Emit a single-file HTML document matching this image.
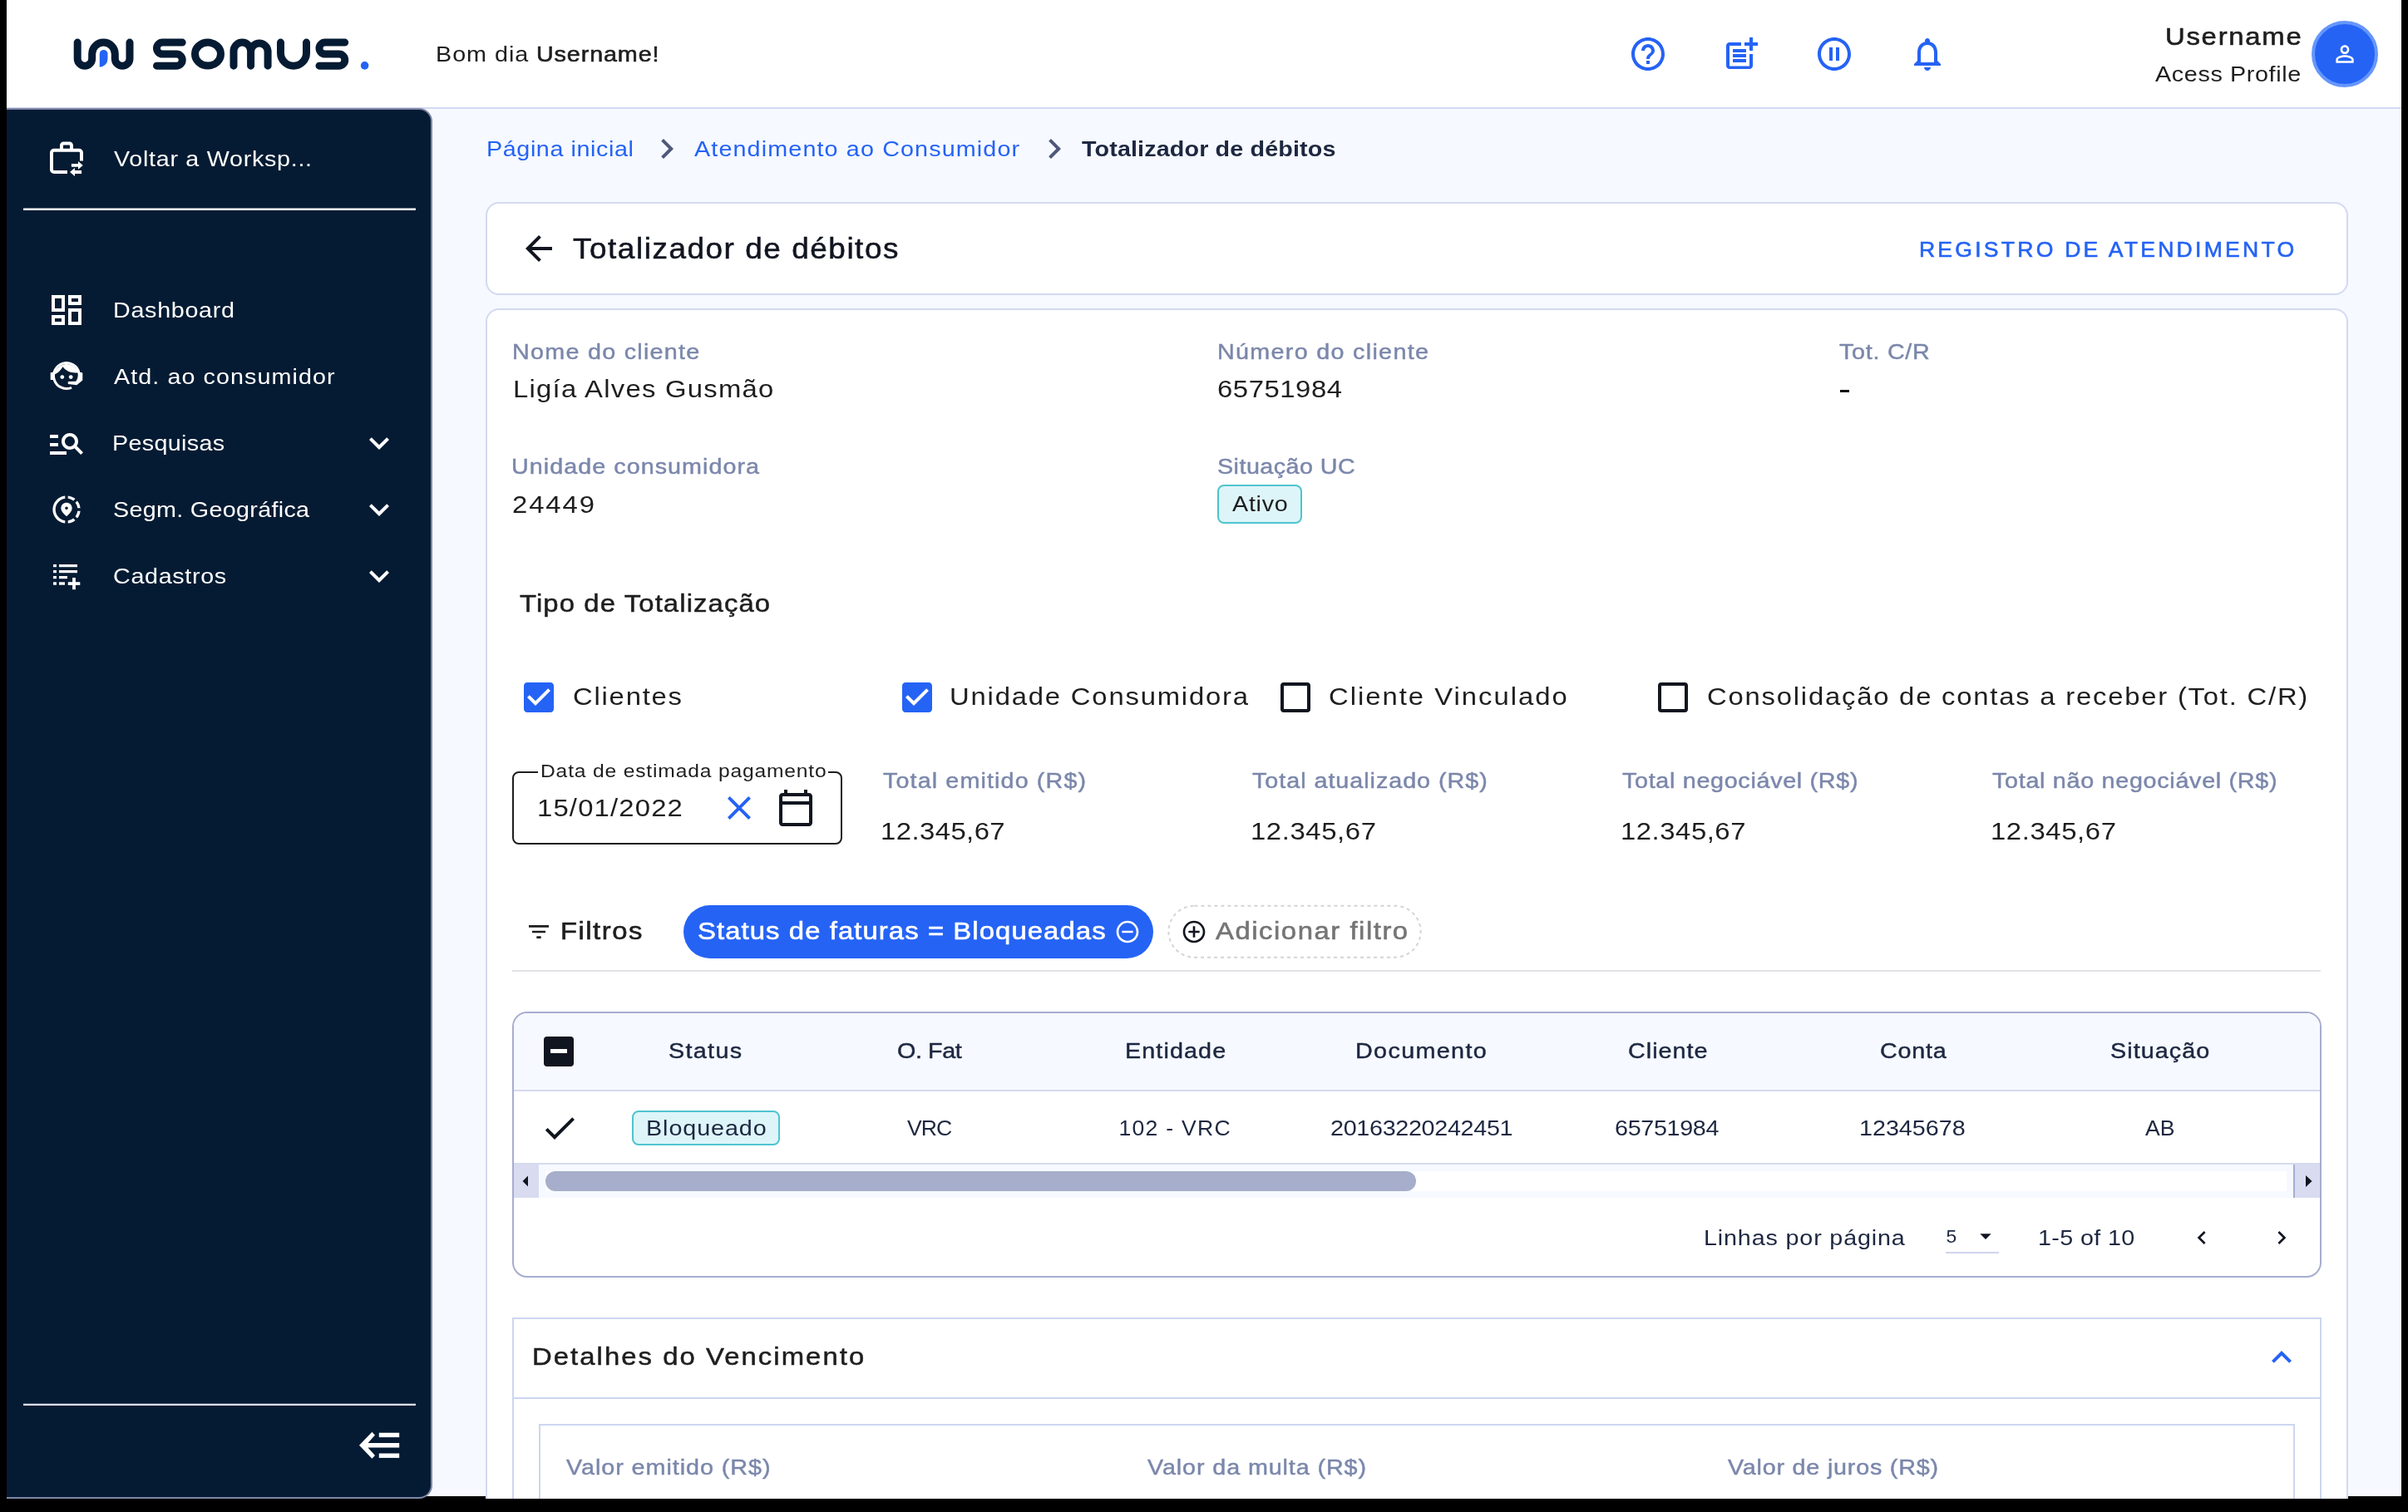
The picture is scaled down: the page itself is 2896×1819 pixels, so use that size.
<!DOCTYPE html>
<html lang="pt-BR"><head><meta charset="utf-8"><title>Totalizador de débitos</title><style>
html,body{margin:0;padding:0;background:#000;}
body{width:2896px;height:1819px;overflow:hidden;position:relative;font-family:"Liberation Sans",sans-serif;}
#app{position:absolute;left:0;top:0;width:2896px;height:1819px;overflow:hidden;will-change:transform;}
#app div,#app svg,#app span{position:absolute;box-sizing:border-box;}
.t{white-space:pre;transform-origin:0 0;}
</style></head><body><div id="app">
<div style="left:8px;top:0px;width:2880px;height:1800px;background:#f6f9ff;"></div>
<div style="left:8px;top:0px;width:2880px;height:131px;background:#fff;border-bottom:2px solid #d3d9f0;"></div>
<svg style="left:0;top:0" width="480" height="130" viewBox="0 0 480 130" fill="none" stroke="#051b33" stroke-width="9" stroke-linecap="round" stroke-linejoin="round">
<path d="M93.2,51.1 V70.4 A8.75,8.75 0 0 0 110.7,70.4 V64.9 A13.8,13.8 0 0 1 138.3,64.9 V70.4 A8.75,8.75 0 0 0 156,70.4 V51.1"/>
<path d="M219.2,51.1 H195.5 A7,7 0 0 0 195.5,65.1 H212.2 A7,7 0 0 1 212.2,79.15 H188.5"/>
<ellipse cx="250" cy="65.1" rx="15.5" ry="14"/>
<path d="M281,79.15 V61.4 A10.3,10.3 0 0 1 301.6,61.4 V79.15 M301.6,61.4 A10.3,10.3 0 0 1 322.1,61.4 V79.15"/>
<path d="M337.5,51.1 V63.65 A15.5,15.5 0 0 0 368.5,63.65 V51.1"/>
<path d="M414.7,51.1 H391 A7,7 0 0 0 391,65.1 H407.7 A7,7 0 0 1 407.7,79.15 H384"/>
<path stroke="none" fill="#2563f5" d="M119.8,80.7 V64.8 A4.85,4.85 0 0 1 129.5,64.8 V71 A9.7,9.7 0 0 1 119.8,80.7 Z"/>
<circle stroke="none" fill="#2563f5" cx="438.6" cy="78.9" r="4.8"/>
</svg>
<span class="t" id="t3" style="left:524.44px;top:49.00px;font-size:26.6px;line-height:32px;color:#1e1e1e;letter-spacing:0.905px;transform:scaleX(1.08);">Bom dia</span>
<span class="t" id="t4" style="left:645.16px;top:49.00px;font-size:26.6px;line-height:32px;color:#1e1e1e;letter-spacing:0.813px;transform:scaleX(1.08);-webkit-text-stroke:0.6px #1e1e1e;">Username!</span>
<svg style="left:1958px;top:41px" width="48" height="48" viewBox="0 0 24 24"><path fill="#2563f5" d="M11 18h2v-2h-2v2zm1-16C6.48 2 2 6.48 2 12s4.48 10 10 10 10-4.48 10-10S17.52 2 12 2zm0 18c-4.41 0-8-3.59-8-8s3.59-8 8-8 8 3.59 8 8-3.59 8-8 8zm0-14c-2.21 0-4 1.79-4 4h2c0-1.1.9-2 2-2s2 .9 2 2c0 2-3 1.75-3 5h2c0-2.25 3-2.5 3-5 0-2.21-1.79-4-4-4z"/></svg>
<svg style="left:2070px;top:41px" width="48" height="48" viewBox="0 0 24 24"><path fill="#2563f5" d="M17 19.22H5V7h7V5H5c-1.1 0-2 .9-2 2v12c0 1.1.9 2 2 2h12c1.1 0 2-.9 2-2v-7h-2v7.22z M19 2h-2v3h-3c.01.01 0 2 0 2h3v2.99c.01.01 2 0 2 0V7h3V5h-3V2z M7 9h8v2H7z M7 12v2h8v-2h-3z M7 15h8v2H7z"/></svg>
<svg style="left:2182px;top:41px" width="48" height="48" viewBox="0 0 24 24"><path fill="#2563f5" d="M9 16h2V8H9v8zm3-14C6.48 2 2 6.48 2 12s4.48 10 10 10 10-4.48 10-10S17.52 2 12 2zm0 18c-4.41 0-8-3.59-8-8s3.59-8 8-8 8 3.59 8 8-3.59 8-8 8zm1-4h2V8h-2v8z"/></svg>
<svg style="left:2294px;top:41px" width="48" height="48" viewBox="0 0 24 24"><path fill="#2563f5" d="M12 22c1.1 0 2-.9 2-2h-4c0 1.1.9 2 2 2zm6-6v-5c0-3.07-1.63-5.64-4.5-6.32V4c0-.83-.67-1.5-1.5-1.5s-1.5.67-1.5 1.5v.68C7.64 5.36 6 7.92 6 11v5l-2 2v1h16v-1l-2-2zm-2 1H8v-6c0-2.48 1.51-4.5 4-4.5s4 2.02 4 4.5v6z"/></svg>
<span class="t" id="t9" style="left:2603.76px;top:25.00px;font-size:30.4px;line-height:36px;color:#1e1e1e;letter-spacing:1.625px;transform:scaleX(1.08);-webkit-text-stroke:0.6px #1e1e1e;">Username</span>
<span class="t" id="t10" style="left:2592.00px;top:73.00px;font-size:26.6px;line-height:32px;color:#1e1e1e;letter-spacing:0.590px;transform:scaleX(1.08);">Acess Profile</span>
<div style="left:2780px;top:25px;width:80px;height:80px;border-radius:50%;background:#2563f5;border:4px solid #6596fb;"></div>
<svg style="left:2804px;top:49px" width="32" height="32" viewBox="0 0 24 24"><path fill="#fff" d="M12 5.9c1.16 0 2.1.94 2.1 2.1s-.94 2.1-2.1 2.1S9.9 9.16 9.9 8s.94-2.1 2.1-2.1m0 9c2.97 0 6.1 1.46 6.1 2.1v1.1H5.9V17c0-.64 3.13-2.1 6.1-2.1M12 4C9.79 4 8 5.79 8 8s1.79 4 4 4 4-1.79 4-4-1.79-4-4-4zm0 9c-2.67 0-8 1.34-8 4v3h16v-3c0-2.66-5.33-4-8-4z"/></svg>
<div style="left:8px;top:130px;width:512px;height:1673px;background:#051b33;border:2px solid #8087a9;border-left:none;border-radius:0 16px 16px 0;"></div>
<svg style="left:52px;top:162px" width="56" height="56" viewBox="52 162 56 56" fill="none" stroke="#fff" stroke-width="4">
<path d="M98,193.4 V183.8 a3,3 0 0 0 -3,-3 H65 a3,3 0 0 0 -3,3 V204 a3,3 0 0 0 3,3 H81"/>
<path d="M74,180.8 V175 a2.5,2.5 0 0 1 2.5,-2.5 h7 a2.5,2.5 0 0 1 2.5,2.5 V180.8"/>
<path stroke="none" fill="#fff" d="M85.9,197 H94 V194 L99.8,198.9 L94,203.7 V200.8 H85.9 Z M98.1,204.9 H90 V202 L84,207 L90,212 V209 H98.1 Z"/>
</svg>
<span class="t" id="t15" style="left:137.00px;top:175.00px;font-size:26.6px;line-height:32px;color:#fff;letter-spacing:0.650px;transform:scaleX(1.08);">Voltar a Worksp...</span>
<svg style="left:28px;top:248px" width="472" height="8" viewBox="0 0 472 8"><rect x="0" y="2.5" width="472" height="2.5" fill="#fff"/></svg>
<svg style="left:56px;top:349px" width="48" height="48" viewBox="0 0 24 24"><path fill="#fff" d="M19 5v2h-4V5h4M9 5v6H5V5h4m10 8v6h-4v-6h4M9 17v2H5v-2h4M21 3h-8v6h8V3zM11 3H3v10h8V3zm10 8h-8v10h8V11zm-10 4H3v6h8v-6z"/></svg>
<span class="t" id="t18" style="left:135.84px;top:357.00px;font-size:26.6px;line-height:32px;color:#fff;letter-spacing:0.636px;transform:scaleX(1.08);">Dashboard</span>
<svg style="left:56px;top:428px" width="48" height="48" viewBox="56 428 48 48" fill="#fff">
<path d="M86.06,466.27 A15.5,15.5 0 1 1 95.16,448.78" fill="none" stroke="#fff" stroke-width="3"/>
<path d="M65.6,450.5 Q72.2,447.6 75.4,441.3 Q81.5,449.6 94.3,448.2 A14.8,14.8 0 0 0 65.6,450.5 Z"/>
<rect x="60.7" y="448.1" width="4" height="9" rx="0.6"/>
<path d="M93.6,448 H98.4 L99.3,448.9 V457.4 L92.3,463.2 L81.8,462 V458.9 L91.4,458.7 Q93.8,455.6 93.7,451.5 Z"/>
<circle cx="74.8" cy="453.6" r="2.4"/><circle cx="85.2" cy="453.6" r="2.4"/>
</svg>
<span class="t" id="t20" style="left:137.20px;top:437.00px;font-size:26.6px;line-height:32px;color:#fff;letter-spacing:0.991px;transform:scaleX(1.08);">Atd. ao consumidor</span>
<svg style="left:56px;top:509px" width="48" height="48" viewBox="0 0 24 24"><path fill="#fff" d="M7 9H2V7h5v2zm0 3H2v2h5v-2zm13.59 7l-3.83-3.83c-.8.52-1.74.83-2.76.83-2.76 0-5-2.24-5-5s2.24-5 5-5 5 2.24 5 5c0 1.02-.31 1.96-.83 2.75L22 17.59 20.59 19zM17 11c0-1.65-1.35-3-3-3s-3 1.35-3 3 1.35 3 3 3 3-1.35 3-3zM2 19h10v-2H2v2z"/></svg>
<span class="t" id="t22" style="left:135.34px;top:517.00px;font-size:26.6px;line-height:32px;color:#fff;letter-spacing:0.308px;transform:scaleX(1.08);">Pesquisas</span>
<svg style="left:60px;top:593px" width="40" height="40" viewBox="0 0 24 24"><path fill="#fff" d="M13.02 19.93v2.02c2.01-.2 3.84-1 5.32-2.21l-1.42-1.43c-1.11.86-2.44 1.44-3.9 1.62z M4.03 12c0-4.05 3.03-7.41 6.95-7.93V2.05C5.95 2.58 2.03 6.84 2.03 12c0 5.16 3.92 9.42 8.95 9.95v-2.02c-3.92-.52-6.95-3.88-6.95-7.93z M19.95 11h2.02c-.2-2.01-1-3.84-2.21-5.32l-1.43 1.43c.86 1.1 1.44 2.43 1.62 3.89z M18.34 4.26c-1.48-1.21-3.32-2.01-5.32-2.21v2.02c1.46.18 2.79.76 3.9 1.62l1.42-1.43z M18.33 16.9l1.43 1.42c1.21-1.48 2.01-3.31 2.21-5.32h-2.02c-.18 1.46-.76 2.79-1.62 3.9z M16 11.1C16 8.61 14.1 7 12 7s-4 1.61-4 4.1c0 1.66 1.33 3.63 4 5.9 2.67-2.27 4-4.24 4-5.9zM12 12c-.59 0-1.07-.48-1.07-1.07 0-.59.48-1.07 1.07-1.07s1.07.48 1.07 1.07c0 .59-.48 1.07-1.07 1.07z"/></svg>
<span class="t" id="t24" style="left:136.42px;top:597.00px;font-size:26.6px;line-height:32px;color:#fff;letter-spacing:0.282px;transform:scaleX(1.08);">Segm. Geográfica</span>
<span class="t" id="t25" style="left:136.42px;top:677.00px;font-size:26.6px;line-height:32px;color:#fff;letter-spacing:0.612px;transform:scaleX(1.08);">Cadastros</span>
<svg style="left:432px;top:509px" width="48" height="48" viewBox="0 0 24 24"><path fill="#fff" d="M16.59 8.59L12 13.17 7.41 8.59 6 10l6 6 6-6z"/></svg>
<svg style="left:432px;top:589px" width="48" height="48" viewBox="0 0 24 24"><path fill="#fff" d="M16.59 8.59L12 13.17 7.41 8.59 6 10l6 6 6-6z"/></svg>
<svg style="left:432px;top:669px" width="48" height="48" viewBox="0 0 24 24"><path fill="#fff" d="M16.59 8.59L12 13.17 7.41 8.59 6 10l6 6 6-6z"/></svg>
<svg style="left:56px;top:669px" width="48" height="48" viewBox="56 669 48 48" fill="#fff">
<rect x="64" y="679" width="4" height="3.2"/><rect x="71" y="679" width="22" height="3.2"/>
<rect x="64" y="686" width="4" height="3.2"/><rect x="71" y="686" width="22" height="3.2"/>
<rect x="64" y="693" width="4" height="3.2"/><rect x="71" y="693" width="10" height="3.2"/>
<rect x="64" y="700.3" width="4" height="3.4"/><rect x="71" y="700.3" width="7" height="3.4"/>
<rect x="81.8" y="700.2" width="14.5" height="3.8"/><rect x="87.1" y="695" width="3.8" height="14.2"/>
</svg>
<svg style="left:28px;top:1686px" width="472" height="8" viewBox="0 0 472 8"><rect x="0" y="2.7" width="472" height="2.3" fill="#dcdee9"/></svg>
<svg style="left:424px;top:1714px" width="64" height="50" viewBox="424 1714 64 50" fill="#fff">
<rect x="455.8" y="1723.7" width="24.4" height="5.4"/><rect x="455.8" y="1748.5" width="24.4" height="5.4"/>
<path d="M480.2,1736 H442.5 L451,1726.6 L447.4,1722.8 L432,1738.7 L447.4,1754.8 L451,1751 L442.5,1741.4 H480.2 Z"/>
</svg>
<span class="t" id="t32" style="left:584.84px;top:163.00px;font-size:26.6px;line-height:32px;color:#2563f5;letter-spacing:0.547px;transform:scaleX(1.08);">Página inicial</span>
<svg style="left:778px;top:155px" width="48" height="48" viewBox="0 0 24 24"><path fill="#4e587a" d="M10 6L8.59 7.41 13.17 12l-4.58 4.59L10 18l6-6z"/></svg>
<span class="t" id="t34" style="left:835.00px;top:163.00px;font-size:26.6px;line-height:32px;color:#2563f5;letter-spacing:1.047px;transform:scaleX(1.08);">Atendimento ao Consumidor</span>
<svg style="left:1244px;top:155px" width="48" height="48" viewBox="0 0 24 24"><path fill="#4e587a" d="M10 6L8.59 7.41 13.17 12l-4.58 4.59L10 18l6-6z"/></svg>
<span class="t" id="t36" style="left:1301.00px;top:163.00px;font-size:26.6px;line-height:32px;color:#1d2740;letter-spacing:0.119px;transform:scaleX(1.08);font-weight:700;">Totalizador de débitos</span>
<div style="left:584px;top:243px;width:2240px;height:112px;background:#fff;border:2px solid #d3d9f0;border-radius:16px;"></div>
<svg style="left:624px;top:274.5px" width="48" height="48" viewBox="0 0 24 24"><path fill="#11151f" d="M20 11H7.83l5.59-5.59L12 4l-8 8 8 8 1.41-1.41L7.83 13H20v-2z"/></svg>
<span class="t" id="t39" style="left:689.17px;top:279.00px;font-size:34.2px;line-height:40px;color:#11151f;letter-spacing:1.422px;transform:scaleX(1.08);-webkit-text-stroke:0.5px #11151f;">Totalizador de débitos</span>
<span class="t" id="t40" style="left:2307.90px;top:284.00px;font-size:26.6px;line-height:32px;color:#2563f5;letter-spacing:3.225px;-webkit-text-stroke:0.6px #2563f5;">REGISTRO DE ATENDIMENTO</span>
<div style="left:584px;top:371px;width:2240px;height:1432px;background:#fff;border:2px solid #d3d9f0;border-bottom:none;border-radius:16px 16px 0 0;"></div>
<span class="t" id="t42" style="left:616.28px;top:407.00px;font-size:26.6px;line-height:32px;color:#7b87ab;letter-spacing:1.176px;transform:scaleX(1.08);-webkit-text-stroke:0.45px #7b87ab;">Nome do cliente</span>
<span class="t" id="t43" style="left:616.54px;top:449.00px;font-size:30.4px;line-height:36px;color:#1e1e1e;letter-spacing:1.167px;transform:scaleX(1.08);">Ligía Alves Gusmão</span>
<span class="t" id="t44" style="left:1463.88px;top:407.00px;font-size:26.6px;line-height:32px;color:#7b87ab;letter-spacing:1.206px;transform:scaleX(1.08);-webkit-text-stroke:0.45px #7b87ab;">Número do cliente</span>
<span class="t" id="t45" style="left:1463.92px;top:449.00px;font-size:30.4px;line-height:36px;color:#1e1e1e;letter-spacing:0.521px;transform:scaleX(1.08);">65751984</span>
<span class="t" id="t46" style="left:2212.04px;top:407.00px;font-size:26.6px;line-height:32px;color:#7b87ab;letter-spacing:0.670px;transform:scaleX(1.08);-webkit-text-stroke:0.45px #7b87ab;">Tot. C/R</span>
<div style="left:2213.4px;top:468.6px;width:10.8px;height:3.5px;background:#111;"></div>
<span class="t" id="t48" style="left:615.48px;top:545.00px;font-size:26.6px;line-height:32px;color:#7b87ab;letter-spacing:0.958px;transform:scaleX(1.08);-webkit-text-stroke:0.45px #7b87ab;">Unidade consumidora</span>
<span class="t" id="t49" style="left:616.32px;top:588.00px;font-size:30.4px;line-height:36px;color:#1e1e1e;letter-spacing:1.777px;transform:scaleX(1.08);">24449</span>
<span class="t" id="t50" style="left:1464.16px;top:545.00px;font-size:26.6px;line-height:32px;color:#7b87ab;letter-spacing:0.424px;transform:scaleX(1.08);-webkit-text-stroke:0.45px #7b87ab;">Situação UC</span>
<div style="left:1464px;top:583px;width:101.5px;height:47.4px;background:#ddf5f9;border:2px solid #4fc4cf;border-radius:8px;"></div>
<span class="t" id="t52" style="left:1482.10px;top:590.00px;font-size:26.6px;line-height:32px;color:#1e1e1e;letter-spacing:0.671px;transform:scaleX(1.08);">Ativo</span>
<span class="t" id="t53" style="left:625.17px;top:707.00px;font-size:30.4px;line-height:36px;color:#1e1e1e;letter-spacing:1.036px;transform:scaleX(1.08);-webkit-text-stroke:0.5px #1e1e1e;">Tipo de Totalização</span>
<div style="left:634px;top:825px;width:28px;height:28px;background:#fff;"></div>
<svg style="left:624px;top:814.8px" width="48" height="48" viewBox="0 0 24 24"><path fill="#2563f5" d="M19 3H5c-1.11 0-2 .9-2 2v14c0 1.1.89 2 2 2h14c1.11 0 2-.9 2-2V5c0-1.1-.89-2-2-2zm-9 14l-5-5 1.41-1.41L10 14.17l7.59-7.59L19 8l-9 9z"/></svg>
<div style="left:1089px;top:825px;width:28px;height:28px;background:#fff;"></div>
<svg style="left:1079px;top:814.8px" width="48" height="48" viewBox="0 0 24 24"><path fill="#2563f5" d="M19 3H5c-1.11 0-2 .9-2 2v14c0 1.1.89 2 2 2h14c1.11 0 2-.9 2-2V5c0-1.1-.89-2-2-2zm-9 14l-5-5 1.41-1.41L10 14.17l7.59-7.59L19 8l-9 9z"/></svg>
<div style="left:1540px;top:820.8px;width:36px;height:36px;border:4px solid #11151f;border-radius:4px;background:#fff;"></div>
<div style="left:1994px;top:820.8px;width:36px;height:36px;border:4px solid #11151f;border-radius:4px;background:#fff;"></div>
<span class="t" id="t60" style="left:688.72px;top:819.00px;font-size:30.4px;line-height:36px;color:#1e1e1e;letter-spacing:1.642px;transform:scaleX(1.08);">Clientes</span>
<span class="t" id="t61" style="left:1141.84px;top:819.00px;font-size:30.4px;line-height:36px;color:#1e1e1e;letter-spacing:1.670px;transform:scaleX(1.08);">Unidade Consumidora</span>
<span class="t" id="t62" style="left:1597.52px;top:819.00px;font-size:30.4px;line-height:36px;color:#1e1e1e;letter-spacing:1.840px;transform:scaleX(1.08);">Cliente Vinculado</span>
<span class="t" id="t63" style="left:2052.62px;top:819.00px;font-size:30.4px;line-height:36px;color:#1e1e1e;letter-spacing:1.646px;transform:scaleX(1.08);">Consolidação de contas a receber (Tot. C/R)</span>
<div style="left:616px;top:928px;width:397px;height:88px;border:2px solid #1e1e1e;border-radius:8px;"></div>
<div style="left:647px;top:924px;width:349px;height:10px;background:#fff;"></div>
<span class="t" id="t66" style="left:649.62px;top:913.00px;font-size:22.8px;line-height:28px;color:#1e1e1e;letter-spacing:0.766px;transform:scaleX(1.08);">Data de estimada pagamento</span>
<span class="t" id="t67" style="left:646.24px;top:953.00px;font-size:30.4px;line-height:36px;color:#1e1e1e;letter-spacing:1.086px;transform:scaleX(1.08);">15/01/2022</span>
<svg style="left:865px;top:947.8px" width="48" height="48" viewBox="0 0 24 24"><path fill="#2563f5" d="M19 6.41L17.59 5 12 10.59 6.41 5 5 6.41 10.59 12 5 17.59 6.41 19 12 13.41 17.59 19 19 17.59 13.41 12z"/></svg>
<svg style="left:933px;top:947.8px" width="48" height="48" viewBox="0 0 24 24"><path fill="#11151f" d="M20 3h-1V1h-2v2H7V1H5v2H4c-1.1 0-2 .9-2 2v16c0 1.1.9 2 2 2h16c1.1 0 2-.9 2-2V5c0-1.1-.9-2-2-2zm0 18H4V10h16v11zm0-13H4V5h16v3z"/></svg>
<span class="t" id="t70" style="left:1061.64px;top:923.00px;font-size:26.6px;line-height:32px;color:#7b87ab;letter-spacing:1.034px;transform:scaleX(1.08);-webkit-text-stroke:0.45px #7b87ab;">Total emitido (R$)</span>
<span class="t" id="t71" style="left:1059.24px;top:981.00px;font-size:30.4px;line-height:36px;color:#1e1e1e;letter-spacing:0.418px;transform:scaleX(1.08);">12.345,67</span>
<span class="t" id="t72" style="left:1506.04px;top:923.00px;font-size:26.6px;line-height:32px;color:#7b87ab;letter-spacing:0.894px;transform:scaleX(1.08);-webkit-text-stroke:0.45px #7b87ab;">Total atualizado (R$)</span>
<span class="t" id="t73" style="left:1503.64px;top:981.00px;font-size:30.4px;line-height:36px;color:#1e1e1e;letter-spacing:0.569px;transform:scaleX(1.08);">12.345,67</span>
<span class="t" id="t74" style="left:1951.24px;top:923.00px;font-size:26.6px;line-height:32px;color:#7b87ab;letter-spacing:0.632px;transform:scaleX(1.08);-webkit-text-stroke:0.45px #7b87ab;">Total negociável (R$)</span>
<span class="t" id="t75" style="left:1948.84px;top:981.00px;font-size:30.4px;line-height:36px;color:#1e1e1e;letter-spacing:0.511px;transform:scaleX(1.08);">12.345,67</span>
<span class="t" id="t76" style="left:2395.94px;top:923.00px;font-size:26.6px;line-height:32px;color:#7b87ab;letter-spacing:0.649px;transform:scaleX(1.08);-webkit-text-stroke:0.45px #7b87ab;">Total não negociável (R$)</span>
<span class="t" id="t77" style="left:2393.54px;top:981.00px;font-size:30.4px;line-height:36px;color:#1e1e1e;letter-spacing:0.569px;transform:scaleX(1.08);">12.345,67</span>
<svg style="left:632px;top:1104.7px" width="32" height="32" viewBox="0 0 24 24"><path fill="#1e1e1e" d="M10 18h4v-2h-4v2zM3 6v2h18V6H3zm3 7h12v-2H6v2z"/></svg>
<span class="t" id="t79" style="left:673.76px;top:1101.00px;font-size:30.4px;line-height:36px;color:#1e1e1e;letter-spacing:1.384px;transform:scaleX(1.08);-webkit-text-stroke:0.6px #1e1e1e;">Filtros</span>
<div style="left:822px;top:1089px;width:565px;height:64px;background:#2563f5;border-radius:32px;"></div>
<span class="t" id="t81" style="left:839.34px;top:1101.00px;font-size:30.4px;line-height:36px;color:#fff;letter-spacing:1.010px;transform:scaleX(1.08);-webkit-text-stroke:0.6px #fff;">Status de faturas = Bloqueadas</span>
<svg style="left:1340px;top:1104.7px" width="32" height="32" viewBox="0 0 24 24"><path fill="#fff" d="M7 11v2h10v-2H7zm5-9C6.48 2 2 6.48 2 12s4.48 10 10 10 10-4.48 10-10S17.52 2 12 2zm0 18c-4.41 0-8-3.59-8-8s3.59-8 8-8 8 3.59 8 8-3.59 8-8 8z"/></svg>
<svg style="left:1400px;top:1084px" width="314" height="74" viewBox="1400 1084 314 74"><rect x="1405.4" y="1089.7" width="303.2" height="62" rx="31" fill="none" stroke="#d4d4d4" stroke-width="2" stroke-dasharray="4 4"/></svg>
<svg style="left:1420px;top:1104.5px" width="32" height="32" viewBox="0 0 24 24"><path fill="#11151f" d="M13 7h-2v4H7v2h4v4h2v-4h4v-2h-4V7zm-1-5C6.48 2 2 6.48 2 12s4.48 10 10 10 10-4.48 10-10S17.52 2 12 2zm0 18c-4.41 0-8-3.59-8-8s3.59-8 8-8 8 3.59 8 8-3.59 8-8 8z"/></svg>
<span class="t" id="t85" style="left:1461.82px;top:1101.00px;font-size:30.4px;line-height:36px;color:#757575;letter-spacing:1.430px;transform:scaleX(1.08);-webkit-text-stroke:0.6px #757575;">Adicionar filtro</span>
<div style="left:616px;top:1167px;width:2175px;height:2px;background:#e2e2e6;"></div>
<div style="left:616px;top:1216.5px;width:2176px;height:320px;background:#fff;border:2px solid #a6adcf;border-radius:18px;"></div>
<div style="left:618px;top:1218.5px;width:2172px;height:92.5px;background:#f6f9ff;border-radius:16px 16px 0 0;"></div>
<div style="left:618px;top:1311px;width:2172px;height:2px;background:#d6daee;"></div>
<div style="left:654px;top:1247px;width:36px;height:36px;background:#11151f;border-radius:4px;"></div>
<div style="left:662px;top:1262.3px;width:20.4px;height:4.6px;background:#fff;"></div>
<span class="t" id="t92" style="left:804.26px;top:1248.00px;font-size:26.6px;line-height:32px;color:#1d2740;letter-spacing:1.236px;transform:scaleX(1.08);-webkit-text-stroke:0.45px #1d2740;">Status</span>
<span class="t" id="t93" style="left:1078.86px;top:1248.00px;font-size:26.6px;line-height:32px;color:#1d2740;letter-spacing:-0.383px;transform:scaleX(1.08);-webkit-text-stroke:0.45px #1d2740;">O. Fat</span>
<span class="t" id="t94" style="left:1352.88px;top:1248.00px;font-size:26.6px;line-height:32px;color:#1d2740;letter-spacing:1.022px;transform:scaleX(1.08);-webkit-text-stroke:0.45px #1d2740;">Entidade</span>
<span class="t" id="t95" style="left:1630.28px;top:1248.00px;font-size:26.6px;line-height:32px;color:#1d2740;letter-spacing:1.255px;transform:scaleX(1.08);-webkit-text-stroke:0.45px #1d2740;">Documento</span>
<span class="t" id="t96" style="left:1957.66px;top:1248.00px;font-size:26.6px;line-height:32px;color:#1d2740;letter-spacing:0.933px;transform:scaleX(1.08);-webkit-text-stroke:0.45px #1d2740;">Cliente</span>
<span class="t" id="t97" style="left:2261.16px;top:1248.00px;font-size:26.6px;line-height:32px;color:#1d2740;letter-spacing:0.699px;transform:scaleX(1.08);-webkit-text-stroke:0.45px #1d2740;">Conta</span>
<span class="t" id="t98" style="left:2537.86px;top:1248.00px;font-size:26.6px;line-height:32px;color:#1d2740;letter-spacing:0.975px;transform:scaleX(1.08);-webkit-text-stroke:0.45px #1d2740;">Situação</span>
<svg style="left:648.5px;top:1333px" width="48" height="48" viewBox="0 0 24 24"><path fill="#11151f" d="M9 16.17L4.83 12l-1.42 1.41L9 19 21 7l-1.41-1.41z"/></svg>
<div style="left:760px;top:1335.5px;width:178px;height:42px;background:#ddf5f9;border:2px solid #4fc4cf;border-radius:8px;"></div>
<span class="t" id="t101" style="left:776.84px;top:1341.00px;font-size:26.6px;line-height:32px;color:#1d2740;letter-spacing:0.851px;transform:scaleX(1.08);">Bloqueado</span>
<span class="t" id="t102" style="left:1090.90px;top:1341.00px;font-size:26.6px;line-height:32px;color:#1d2740;letter-spacing:-0.926px;">VRC</span>
<span class="t" id="t103" style="left:1345.50px;top:1341.00px;font-size:26.6px;line-height:32px;color:#1d2740;letter-spacing:1.244px;">102 - VRC</span>
<span class="t" id="t104" style="left:1599.62px;top:1341.00px;font-size:26.6px;line-height:32px;color:#1d2740;letter-spacing:-0.292px;transform:scaleX(1.08);">20163220242451</span>
<span class="t" id="t105" style="left:1942.42px;top:1341.00px;font-size:26.6px;line-height:32px;color:#1d2740;letter-spacing:-0.310px;transform:scaleX(1.08);">65751984</span>
<span class="t" id="t106" style="left:2236.04px;top:1341.00px;font-size:26.6px;line-height:32px;color:#1d2740;letter-spacing:-0.024px;transform:scaleX(1.08);">12345678</span>
<span class="t" id="t107" style="left:2580.00px;top:1341.00px;font-size:26.6px;line-height:32px;color:#1d2740;letter-spacing:-0.047px;">AB</span>
<div style="left:618px;top:1399px;width:2172px;height:2px;background:#d6daee;"></div>
<div style="left:618px;top:1401px;width:2172px;height:40px;background:#f6f9ff;"></div>
<div style="left:618px;top:1401px;width:30px;height:40px;background:#d9dcf0;"></div>
<div style="left:2758px;top:1401px;width:32px;height:40px;background:#d9dcf0;border-left:2px solid #a6adcf;"></div>
<svg style="left:626px;top:1411px" width="12" height="20" viewBox="0 0 12 20"><path d="M9,3.5 L2.5,10 L9,16.5 Z" fill="#11151f"/></svg>
<svg style="left:2769px;top:1411px" width="14" height="20" viewBox="0 0 14 20"><path d="M4,3 L11.5,10 L4,17 Z" fill="#11151f"/></svg>
<div style="left:656px;top:1409px;width:2094px;height:24px;background:#fff;"></div>
<div style="left:656px;top:1409px;width:1047px;height:24px;background:#a6aecb;border-radius:12px;"></div>
<span class="t" id="t116" style="left:2048.94px;top:1473.00px;font-size:26.6px;line-height:32px;color:#1d2740;letter-spacing:0.779px;transform:scaleX(1.08);">Linhas por página</span>
<span class="t" id="t117" style="left:2340.60px;top:1473.00px;font-size:22.8px;line-height:28px;color:#1d2740;letter-spacing:0.000px;">5</span>
<svg style="left:2372px;top:1471px" width="32" height="32" viewBox="0 0 24 24"><path fill="#11151f" d="M7 10l5 5 5-5z"/></svg>
<div style="left:2340px;top:1505.5px;width:64px;height:2px;background:#d0d5ec;"></div>
<span class="t" id="t120" style="left:2451.24px;top:1473.00px;font-size:26.6px;line-height:32px;color:#1d2740;letter-spacing:0.339px;transform:scaleX(1.08);">1-5 of 10</span>
<svg style="left:2632.2px;top:1473px" width="32" height="32" viewBox="0 0 24 24"><path fill="#11151f" d="M15.41 7.41L14 6l-6 6 6 6 1.41-1.41L10.83 12z"/></svg>
<svg style="left:2728.1px;top:1473px" width="32" height="32" viewBox="0 0 24 24"><path fill="#11151f" d="M10 6L8.59 7.41 13.17 12l-4.58 4.59L10 18l6-6z"/></svg>
<div style="left:616px;top:1584.7px;width:2176px;height:300px;border:2px solid #ccd6f0;background:#fff;"></div>
<div style="left:618px;top:1681px;width:2172px;height:2px;background:#ccd6f0;"></div>
<span class="t" id="t125" style="left:640.31px;top:1613.00px;font-size:30.4px;line-height:36px;color:#1e1e1e;letter-spacing:1.913px;transform:scaleX(1.08);-webkit-text-stroke:0.5px #1e1e1e;">Detalhes do Vencimento</span>
<svg style="left:2720px;top:1609px" width="48" height="48" viewBox="0 0 24 24"><path fill="#2563f5" d="M12 8l-6 6 1.41 1.41L12 10.83l4.59 4.58L18 14z"/></svg>
<div style="left:648px;top:1712.8px;width:2112px;height:200px;border:2px solid #ccd6f0;background:#fff;"></div>
<span class="t" id="t128" style="left:681.44px;top:1749.00px;font-size:26.6px;line-height:32px;color:#7b87ab;letter-spacing:0.884px;transform:scaleX(1.08);-webkit-text-stroke:0.45px #7b87ab;">Valor emitido (R$)</span>
<span class="t" id="t129" style="left:1380.04px;top:1749.00px;font-size:26.6px;line-height:32px;color:#7b87ab;letter-spacing:0.831px;transform:scaleX(1.08);-webkit-text-stroke:0.45px #7b87ab;">Valor da multa (R$)</span>
<span class="t" id="t130" style="left:2078.24px;top:1749.00px;font-size:26.6px;line-height:32px;color:#7b87ab;letter-spacing:0.727px;transform:scaleX(1.08);-webkit-text-stroke:0.45px #7b87ab;">Valor de juros (R$)</span>
<div style="left:520px;top:1800px;width:64px;height:19px;background:#000;"></div>
<div style="left:2824px;top:1800px;width:72px;height:19px;background:#000;"></div>
<div style="left:0px;top:1803px;width:2896px;height:16px;background:#000;"></div>
<div style="left:0px;top:0px;width:8px;height:1819px;background:#000;"></div>
<div style="left:2888px;top:0px;width:8px;height:1819px;background:#000;"></div>
</div></body></html>
